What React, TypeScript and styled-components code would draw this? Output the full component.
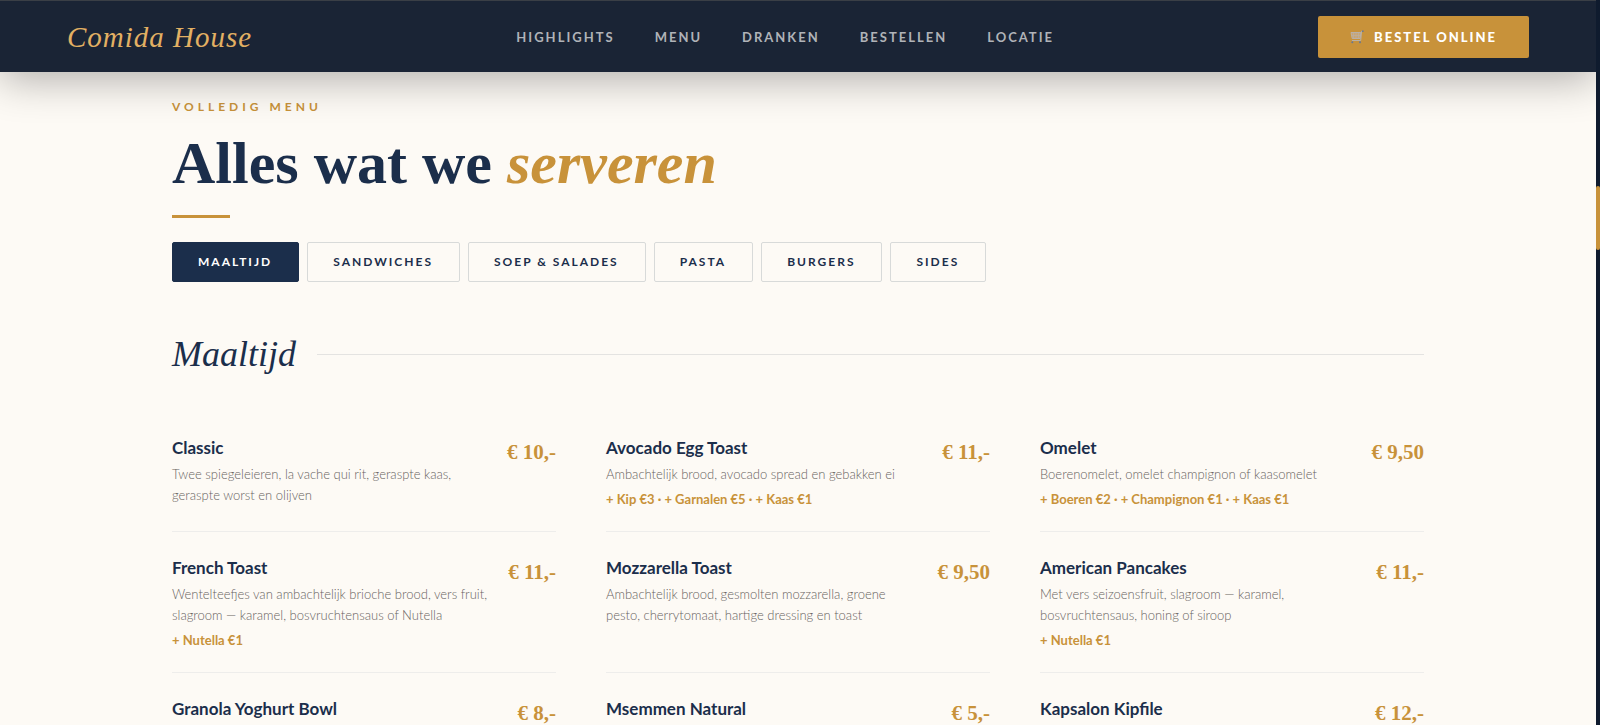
import React, { useState } from "react";
import styled, { createGlobalStyle } from "styled-components";

const sans = `Lato, "Liberation Sans", sans-serif`;
const serif = `"Liberation Serif", serif`;
const navy = "#1b2e4b";
const gold = "#c8923a";

const GlobalStyle = createGlobalStyle`
  *, *::before, *::after { box-sizing: border-box; }
  body { margin: 0; background: #fdfaf5; color: ${navy}; font-family: ${sans}; }
`;

const Shell = styled.div`
  display: flex;
  height: 100vh;
  overflow: hidden;
`;

const Page = styled.div`
  flex: 1;
  min-width: 0;
  overflow: hidden;
`;

const ScrollTrack = styled.div`
  width: 4px;
  padding-top: 186px;
  background: #0f1b2e;
`;

const ScrollThumb = styled.div`
  height: 64px;
  border-radius: 2px;
  background: ${gold};
`;

const Header = styled.header`
  position: relative;
  z-index: 1;
  display: flex;
  align-items: center;
  justify-content: space-between;
  height: 72px;
  padding: 0 67px;
  border-top: 1px solid #3a3f46;
  background: #1a2435;
  box-shadow: 0 8px 42px rgba(0, 0, 0, 0.3);
`;

const Logo = styled.a`
  font: italic 400 29px/40px ${serif};
  letter-spacing: 1px;
  color: #e2b063;
  text-decoration: none;
`;

const Nav = styled.nav`
  display: flex;
  gap: 40px;
`;

const NavLink = styled.a`
  font-size: 13px;
  line-height: 20px;
  font-weight: 700;
  letter-spacing: 2px;
  text-transform: uppercase;
  text-decoration: none;
  color: #b0b3b8;
`;

const OrderButton = styled.button`
  display: flex;
  align-items: center;
  gap: 10px;
  height: 42px;
  padding: 0 32px;
  border: 0;
  border-radius: 2px;
  background: ${gold};
  color: #fff;
  font: 900 13px/20px ${sans};
  letter-spacing: 2px;
  text-transform: uppercase;
`;

const Main = styled.main`
  max-width: 1380px;
  margin: 0 auto;
  padding: 25px 64px 0;
`;

const Eyebrow = styled.p`
  margin: 0;
  font-size: 12px;
  line-height: 20px;
  font-weight: 700;
  letter-spacing: 4px;
  text-transform: uppercase;
  color: ${gold};
`;

const Title = styled.h1`
  margin: 12px 0 18px;
  font: 700 60px/68px ${serif};

  em { color: ${gold}; }
`;

const Rule = styled.div`
  width: 58px;
  height: 3px;
  background: ${gold};
`;

const Tabs = styled.div`
  display: flex;
  flex-wrap: wrap;
  gap: 8px;
  margin-top: 24px;
`;

const Tab = styled.button<{ $active: boolean }>`
  height: 40px;
  padding: 0 26px 0 25px;
  border: 1px solid ${(p) => (p.$active ? navy : "#d8dad9")};
  border-radius: 2px;
  background: ${(p) => (p.$active ? navy : "transparent")};
  color: ${(p) => (p.$active ? "#fff" : navy)};
  font: 700 12px/20px ${sans};
  letter-spacing: 2px;
  text-transform: uppercase;
`;

const SectionHead = styled.div`
  display: flex;
  align-items: center;
  gap: 21px;
  margin: 48px 0 34px;

  &::after {
    content: "";
    flex: 1;
    height: 1px;
    background: #e4e3e1;
  }
`;

const SectionTitle = styled.h2`
  margin: 0;
  font: italic 400 36px/48px ${serif};
`;

const Grid = styled.div`
  display: grid;
  grid-template-columns: repeat(3, 1fr);
  column-gap: 50px;
`;

const Item = styled.article`
  display: flex;
  justify-content: space-between;
  gap: 16px;
  padding: 23px 0;
  border-bottom: 1px solid #eeedeb;
`;

const Dish = styled.h3`
  margin: 0 0 3px;
  font-size: 17px;
  line-height: 26px;
  font-weight: 700;
`;

const Description = styled.p`
  margin: 0;
  font-size: 13px;
  line-height: 21px;
  font-weight: 300;
  color: #68635f;
`;

const Extras = styled.p`
  margin: 5px 0 0;
  font-size: 13px;
  line-height: 18px;
  font-weight: 700;
  color: ${gold};
`;

const Price = styled.span`
  padding-top: 4px;
  font: 700 21px/26px ${serif};
  white-space: nowrap;
  color: ${gold};
`;

const CartIcon = () => (
  <svg width="14" height="14" viewBox="0 0 14 14" fill="none" aria-hidden="true">
    <path d="M1 2.500h9.800l-.6 6H2.200z" fill="#c9a574" stroke="#b9b0a6" />
    <path d="M3.500 3v5M6 3v5M8.500 3v5M1.500 5.500h9" stroke="#b9b0a6" strokeWidth=".6" />
    <path d="M12.800 1.200h-1.200l-.9 9.300H2" stroke="#b9b0a6" />
    <circle cx="2.300" cy="12.200" r="1" fill="#667793" />
    <circle cx="10" cy="12.200" r="1" fill="#667793" />
    <circle cx="12.800" cy="1.200" r=".9" fill="#667793" />
  </svg>
);

const links = ["Highlights", "Menu", "Dranken", "Bestellen", "Locatie"];
const categories = ["Maaltijd", "Sandwiches", "Soep & Salades", "Pasta", "Burgers", "Sides"];

interface MenuItem {
  name: string;
  price: string;
  description?: string;
  extras?: string;
}

const dishes: MenuItem[] = [
  { name: "Classic", price: "€ 10,-", description: "Twee spiegeleieren, la vache qui rit, geraspte kaas, geraspte worst en olijven" },
  { name: "Avocado Egg Toast", price: "€ 11,-", description: "Ambachtelijk brood, avocado spread en gebakken ei", extras: "+ Kip €3 · + Garnalen €5 · + Kaas €1" },
  { name: "Omelet", price: "€ 9,50", description: "Boerenomelet, omelet champignon of kaasomelet", extras: "+ Boeren €2 · + Champignon €1 · + Kaas €1" },
  { name: "French Toast", price: "€ 11,-", description: "Wentelteefjes van ambachtelijk brioche brood, vers fruit, slagroom — karamel, bosvruchtensaus of Nutella", extras: "+ Nutella €1" },
  { name: "Mozzarella Toast", price: "€ 9,50", description: "Ambachtelijk brood, gesmolten mozzarella, groene pesto, cherrytomaat, hartige dressing en toast" },
  { name: "American Pancakes", price: "€ 11,-", description: "Met vers seizoensfruit, slagroom — karamel, bosvruchtensaus, honing of siroop", extras: "+ Nutella €1" },
  { name: "Granola Yoghurt Bowl", price: "€ 8,-" },
  { name: "Msemmen Natural", price: "€ 5,-" },
  { name: "Kapsalon Kipfile", price: "€ 12,-" },
];

export default function App() {
  const [active, setActive] = useState("Maaltijd");

  return (
    <Shell>
      <GlobalStyle />
      <Page>
        <Header>
          <Logo href="#top">Comida House</Logo>
          <Nav>
            {links.map((link) => (
              <NavLink key={link} href={`#${link.toLowerCase()}`}>{link}</NavLink>
            ))}
          </Nav>
          <OrderButton type="button"><CartIcon />Bestel online</OrderButton>
        </Header>
        <Main>
          <Eyebrow>Volledig menu</Eyebrow>
          <Title>Alles wat we <em>serveren</em></Title>
          <Rule />
          <Tabs>
            {categories.map((category) => (
              <Tab key={category} type="button" $active={category === active} onClick={() => setActive(category)}>
                {category}
              </Tab>
            ))}
          </Tabs>
          <SectionHead><SectionTitle>Maaltijd</SectionTitle></SectionHead>
          <Grid>
            {dishes.map((dish) => (
              <Item key={dish.name}>
                <div>
                  <Dish>{dish.name}</Dish>
                  {dish.description && <Description>{dish.description}</Description>}
                  {dish.extras && <Extras>{dish.extras}</Extras>}
                </div>
                <Price>{dish.price}</Price>
              </Item>
            ))}
          </Grid>
        </Main>
      </Page>
      <ScrollTrack><ScrollThumb /></ScrollTrack>
    </Shell>
  );
}
